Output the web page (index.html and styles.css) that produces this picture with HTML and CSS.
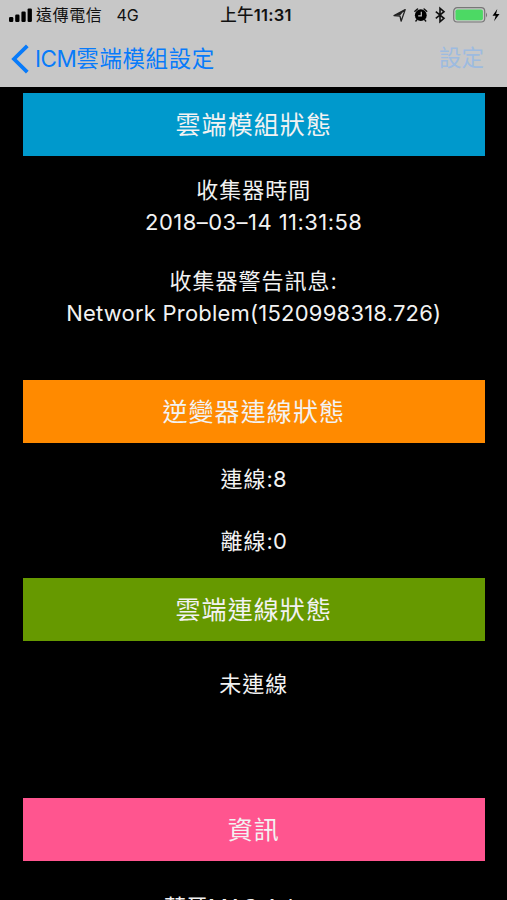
FILE: index.html
```html
<!DOCTYPE html>
<html lang="zh-Hant">
<head>
<meta charset="utf-8">
<title>ICM雲端模組設定</title>
<link rel="stylesheet" href="styles.css">
</head>
<body>
<header class="top">
  <div class="status">
    <div class="carrier">
      <svg class="signal" width="24" height="14" viewBox="0 0 24 14"><rect x="0" y="9" width="4.3" height="5" rx="1.2"/><rect x="6.2" y="6.5" width="4.3" height="7.5" rx="1.2"/><rect x="12.4" y="3.6" width="4.3" height="10.4" rx="1.2"/><rect x="18.6" y="0.4" width="4.3" height="13.6" rx="1.2"/></svg>
      <span class="name">遠傳電信</span><span class="net">4G</span>
    </div>
    <div class="clock"><span class="ampm">上午</span>11:31</div>
    <svg class="indicators" width="110" height="18" viewBox="0 0 110 18">
      <path d="M1 9.6 12.2 3.6 8.1 15.2 7 10.2Z" fill="none" stroke="#222" stroke-width="1.3" stroke-linejoin="round"/>
      <path d="M1 9.6 12.2 3.6 7 9.6Z" fill="#222"/>
      <circle cx="27.8" cy="9.2" r="5.9"/>
      <path d="M21.9 5.2 24.5 3M33.7 5.2 31.1 3M24 13.6 22.9 15M31.6 13.6 32.7 15" stroke="#111" stroke-width="1.5" stroke-linecap="round"/>
      <path d="M28.3 5.8V9.8H25.2" fill="none" stroke="#c7c7c7" stroke-width="1.2"/>
      <path d="M42.8 5.6 51 12.3 47 15.7V2.3L51 5.7 42.8 12.4" fill="none" stroke="#111" stroke-width="1.6"/>
      <rect x="60.7" y="1.7" width="31" height="14.3" rx="3.5" fill="none" stroke="#777" stroke-width="1.2"/>
      <rect x="62.5" y="3.5" width="27.4" height="10.7" rx="1.8" fill="#4cd964"/>
      <path d="M93 6.5Q95.2 9 93 11.5Z" fill="#777"/>
      <path d="M104.3 3 99.5 9.7H102.7L101 15.2 106.5 8.1H103.1Z"/>
    </svg>
  </div>
  <nav class="nav">
    <a class="back"><svg width="18" height="30" viewBox="0 0 18 30"><path d="M16.3 1.8 3 15 16.3 28.2" fill="none" stroke="#087bfa" stroke-width="3.8"/></svg><span><span class="icm">ICM</span>雲端模組設定</span></a>
    <span class="action">設定</span>
  </nav>
</header>
<main>
  <section class="collector">
    <h2 class="blue">雲端模組狀態</h2>
    <p class="first">收集器時間</p>
    <p class="date">2018–03–14 11:31:58</p>
    <p class="warning">收集器警告訊息:</p>
    <p class="problem">Network Problem(1520998318.726)</p>
  </section>
  <section class="inverter">
    <h2 class="orange">逆變器連線狀態</h2>
    <p class="online">連線<span class="count">:8</span></p>
    <p class="offline">離線<span class="count">:0</span></p>
  </section>
  <section class="cloud">
    <h2 class="green">雲端連線狀態</h2>
    <p class="unlinked">未連線</p>
  </section>
  <section class="info">
    <h2 class="pink">資訊</h2>
    <p class="mac">藍牙MAC Adress:</p>
  </section>
</main>
</body>
</html>
```
FILE: styles.css
```css
* { box-sizing: border-box; }
body {
  margin: 0;
  height: 900px;
  overflow: hidden;
  display: flex;
  flex-direction: column;
  background: #000;
  color: #f2f2f2;
  font-family: Inter, "Noto Sans CJK TC", sans-serif;
}
.top { flex: none; height: 87px; background: #c7c7c7; color: #111; }
.status {
  height: 30px;
  display: grid;
  grid-template-columns: 1fr auto 1fr;
  align-items: center;
  padding: 0 4px 0 9px;
  font-size: 16px;
  line-height: 30px;
  white-space: nowrap;
}
.carrier { display: flex; align-items: center; }
.signal { margin-right: 3px; }
.name { letter-spacing: .6px; }
.net { margin-left: 14px; }
.clock { font-weight: 600; font-size: 16.5px; letter-spacing: .25px; }
.ampm { font-weight: 500; }
.indicators { justify-self: end; }
.nav {
  height: 57px;
  display: flex;
  justify-content: space-between;
  padding: 0 23px 0 11px;
  font-size: 22.5px;
  line-height: 56px;
}
.back { display: flex; align-items: center; color: #087bfa; letter-spacing: .6px; }
.back svg { margin-right: 6px; }
.icm { letter-spacing: -.5px; }
.action { color: #9dbbe0; }
main { flex: 1; padding: 6px 22px 0 22.5px; overflow: hidden; }
section { text-align: center; }
h2 {
  margin: 0;
  height: 63px;
  font-size: 25px;
  font-weight: 400;
  line-height: 65px;
  letter-spacing: 1.1px;
}
.blue { background: #0099cc; }
.orange { background: #ff8a00; }
.green { background: #669900; }
.pink { background: #ff558f; }
p { margin: 0; font-size: 22px; line-height: 32px; letter-spacing: 1px; white-space: nowrap; }
.collector { height: 287px; }
.inverter { height: 198px; }
.cloud { height: 220px; }
.first { padding-top: 18px; }
.date { letter-spacing: .45px; }
.warning { padding-top: 27px; }
.problem { letter-spacing: .22px; }
.online { padding-top: 20px; }
.offline { padding-top: 30px; }
.count { letter-spacing: .2px; }
.unlinked { padding-top: 27px; }
.mac { padding-top: 30px; letter-spacing: 0; }
```
